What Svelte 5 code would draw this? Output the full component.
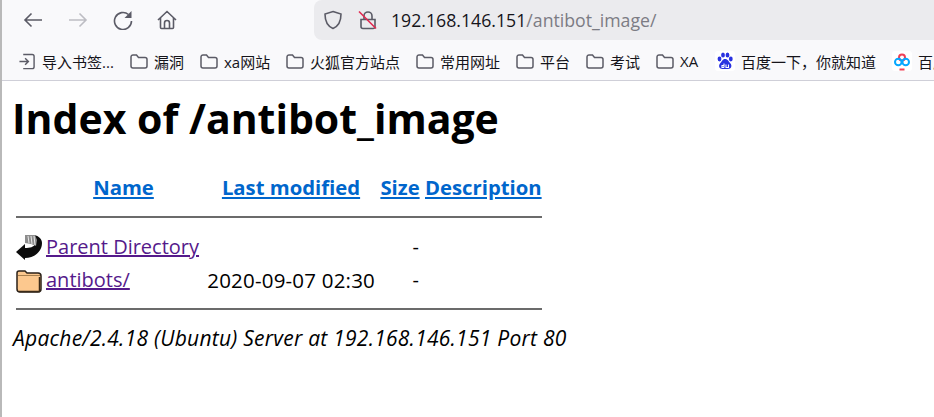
<script lang="ts">
  const bookmarks = [
    { label: '漏洞', w: 70 },
    { label: 'xa网站', w: 86 },
    { label: '火狐官方站点', w: 130 },
    { label: '常用网址', w: 100 },
    { label: '平台', w: 70 },
    { label: '考试', w: 70 },
    { label: 'XA', w: 59 }
  ];
</script>

<div class="window">
  <header class="chrome">
    <div class="toolbar">
      <svg class="nav back" viewBox="0 0 20 20"><path d="M19 10H2M8.500 3.500L2 10l6.500 6.500" /></svg>
      <svg class="nav fwd" viewBox="0 0 20 20"><path d="M1 10h17M11.500 3.500L18 10l-6.500 6.500" /></svg>
      <svg class="nav reload" viewBox="0 0 20 20"><path d="M15.500 4.500A8.500 8.500 0 1 0 18.500 11" /><path class="fill" d="M18.500 1v7h-7z" /></svg>
      <svg class="nav home" viewBox="0 0 20 20"><path d="M1 10l9-8.500 9 8.500M3.500 8v9.500a1 1 0 0 0 1 1h11a1 1 0 0 0 1-1V8M7.500 18.500V13a2.500 2.500 0 0 1 5 0v5.500" /></svg>
      <div class="urlbar">
        <svg class="shield" viewBox="0 0 20 20"><path d="M10 1.500l8 2.500c0 7-2 12-8 14.500C4 16 2 11 2 4z" /></svg>
        <svg class="lock" viewBox="0 0 20 20">
          <path d="M6 9V6a4 4 0 0 1 8 0v3M3 9.500h14v7a2 2 0 0 1-2 2H5a2 2 0 0 1-2-2z" />
          <path class="slash" d="M1 1.500l17 17" />
        </svg>
        <span class="url">192.168.146.151<span class="path">/antibot_image/</span></span>
      </div>
    </div>
    <nav class="bookmarks">
      <span class="mark import">
        <svg viewBox="0 0 18 18"><path d="M5 1.500h9.500a2 2 0 0 1 2 2v11a2 2 0 0 1-2 2H5M1 9h9.500M7 5.500L10.500 9 7 12.500" /></svg>
        导入书签...
      </span>
      {#each bookmarks as b}
        <span class="mark" style={`width:${b.w}px`}>
          <svg viewBox="0 0 18 16"><path d="M1 3.500a2 2 0 0 1 2-2h3.500l2 2.500H15a2 2 0 0 1 2 2v6.500a2 2 0 0 1-2 2H3a2 2 0 0 1-2-2z" /></svg>
          {b.label}
        </span>
      {/each}
      <span class="mark baidu-mark">
        <svg class="tile baidu" viewBox="0 0 20 20">
          <ellipse cx="4.500" cy="8" rx="1.900" ry="2.400" /><ellipse cx="8" cy="4" rx="1.900" ry="2.500" />
          <ellipse cx="12.500" cy="4" rx="1.900" ry="2.500" /><ellipse cx="15.800" cy="8" rx="1.900" ry="2.400" />
          <path d="M10 8c-2.500 0-3 2.500-5 4.500-2 2.500-.5 5.500 2.500 5.500h5.500c3 0 4.500-3 2.500-5.500-2-2-2.500-4.500-5.500-4.500z" />
          <path class="du" d="M9 12.500v4M9 14.500H7v2h2M11 13.500v3h2.500v-3" />
        </svg>
        百度一下，你就知道
      </span>
      <span class="mark cloud-mark">
        <svg class="tile cloud" viewBox="0 0 20 20">
          <circle cx="10" cy="6.500" r="3" class="red" />
          <circle cx="6.300" cy="11" r="3.300" />
          <circle cx="13.700" cy="11" r="3.300" />
          <path class="red" d="M7.500 18.500h5" />
        </svg>
        百度网盘
      </span>
    </nav>
  </header>

  <main class="page">
    <h1>Index of /antibot_image</h1>
    <table>
      <thead>
        <tr>
          <th class="icon"></th>
          <th class="name"><a href="#name">Name</a></th>
          <th class="date"><a href="#date">Last modified</a></th>
          <th class="size"><a href="#size">Size</a></th>
          <th class="desc"><a href="#desc">Description</a></th>
        </tr>
        <tr><th colspan="5" class="rule top"><hr /></th></tr>
      </thead>
      <tbody>
        <tr>
          <td class="icon">
            <svg viewBox="0 0 26 26" class="ico">
              <path d="M0 18l9-8v4c5 0 9-1 10-4l-1-9c5 1 8 4 8 8 0 9-8 15-17 15v2z" fill="#0c0c0c" />
              <path d="M9 1l10 0 2 5-1 6-5-2-6-1z" fill="#8d8d8d" />
              <path d="M12 2l1 7M15 2l1 8M18 2l1 9" stroke="#e8e8e8" stroke-width="1" />
            </svg>
          </td>
          <td><a class="visited" href="#up">Parent Directory</a></td>
          <td></td>
          <td class="num">-</td>
          <td></td>
        </tr>
        <tr>
          <td class="icon">
            <svg viewBox="0 0 26 24" class="ico folder">
              <path d="M1 4a2 2 0 0 1 2-2h6l2 2h11a3 3 0 0 1 3 3v13a3 3 0 0 1-3 3H4a3 3 0 0 1-3-3z" fill="#fcc88e" stroke="#2b2118" stroke-width="1.500" />
              <path d="M2 6.500h22" stroke="#a77f4e" />
              <path d="M23.500 8v14M3 22.500h21" stroke="#3a2a18" stroke-width="1.500" />
            </svg>
          </td>
          <td><a class="visited" href="#dir">antibots/</a></td>
          <td class="when">2020-09-07 02:30</td>
          <td class="num">-</td>
          <td></td>
        </tr>
        <tr><th colspan="5" class="rule"><hr /></th></tr>
      </tbody>
    </table>
    <address>Apache/2.4.18 (Ubuntu) Server at 192.168.146.151 Port 80</address>
  </main>
</div>

<style>
  :global(body) {
    margin: 0;
    background: #fff;
  }

  .window {
    width: 934px;
    height: 417px;
    overflow: hidden;
    box-sizing: border-box;
    border-left: 2px solid #b9b9b9;
    font-family: 'Open Sans', 'Noto Sans CJK SC', sans-serif;
    color: #000;
  }

  .chrome {
    height: 81px;
    box-sizing: border-box;
    background: #f9f9fb;
    border-bottom: 1px solid #cfcfd8;
  }

  .toolbar {
    height: 40px;
    display: flex;
    align-items: center;
  }

  .nav {
    width: 20px;
    height: 20px;
    flex: none;
    fill: none;
    stroke: #5b5b66;
    stroke-width: 1.600;
  }

  .back {
    margin-left: 21px;
  }

  .fwd {
    margin-left: 25px;
    stroke: #bdbdc3;
  }

  .reload {
    margin-left: 25px;
  }

  .reload .fill {
    fill: #5b5b66;
    stroke: none;
  }

  .home {
    margin-left: 24px;
  }

  .urlbar {
    flex: 1;
    height: 40px;
    display: flex;
    align-items: center;
    background: #ebebee;
    border-radius: 8px 0 0 8px;
    margin-left: 137px;
  }

  .urlbar svg {
    width: 20px;
    height: 20px;
    fill: none;
    stroke: #5b5b66;
    stroke-width: 1.600;
    flex: none;
  }

  .shield {
    margin-left: 9px;
  }

  .lock {
    margin-left: 15px;
  }

  .urlbar .slash {
    stroke: #e22850;
  }

  .url {
    margin-left: 13px;
    font-size: 17.700px;
    color: #15141a;
    white-space: nowrap;
  }

  .path {
    color: #7c7c84;
  }

  .bookmarks {
    height: 42px;
    display: flex;
    align-items: center;
    padding-left: 16px;
    white-space: nowrap;
    overflow: hidden;
    font-size: 15px;
    color: #15141a;
  }

  .mark {
    display: flex;
    align-items: center;
    gap: 6px;
    flex: none;
  }

  .mark > svg {
    width: 18px;
    height: 17px;
    fill: none;
    stroke: #5b5b66;
    stroke-width: 1.500;
    flex: none;
  }

  .import {
    width: 112px;
  }

  .baidu-mark {
    width: 177px;
  }

  .cloud-mark {
    width: 60px;
    overflow: hidden;
  }

  .mark > svg.tile {
    width: 20px;
    height: 20px;
    background: #fff;
    border-radius: 3px;
  }

  .mark > svg.baidu {
    fill: #2932e1;
    stroke: none;
  }

  .baidu .du {
    fill: none;
    stroke: #fff;
    stroke-width: 1.100;
  }

  .mark > svg.cloud {
    stroke: #06a7ff;
    stroke-width: 2;
  }

  .cloud .red {
    stroke: #ef4056;
  }

  .page {
    padding: 0 11px;
  }

  h1 {
    margin: 13px 0 0 -1px;
    font-size: 41px;
    line-height: 48px;
    font-weight: 700;
    white-space: nowrap;
  }

  table {
    margin-top: 27px;
    border-collapse: separate;
    border-spacing: 3px 0;
    font-size: 20px;
  }

  th {
    padding: 0;
    font-weight: 700;
    font-size: 20.300px;
    height: 35px;
  }

  td {
    padding: 0;
    height: 33px;
  }

  .icon {
    width: 27px;
  }

  th.name {
    width: 155px;
    padding-right: 3px;
  }

  th.date {
    width: 168px;
  }

  th.size {
    width: 44px;
  }

  th.desc {
    width: 116px;
  }

  a {
    color: #0066cc;
  }

  a.visited {
    color: #551a8b;
  }

  .when {
    text-align: right;
    font-size: 20.500px;
    letter-spacing: 0.200px;
    white-space: nowrap;
  }

  .num {
    text-align: right;
    padding-right: 3px;
  }

  .rule {
    height: 25px;
  }

  .rule.top {
    height: 26px;
  }

  hr {
    margin: 0;
    height: 0;
    border: none;
    border-top: 2px solid #6b6b6b;
  }

  .ico {
    display: block;
    width: 26px;
    height: 26px;
  }

  .folder {
    height: 24px;
    margin-top: 2px;
  }

  address {
    margin-top: 4px;
    font-size: 21px;
    letter-spacing: 0.250px;
    font-style: italic;
    line-height: 27px;
    white-space: nowrap;
  }
</style>
